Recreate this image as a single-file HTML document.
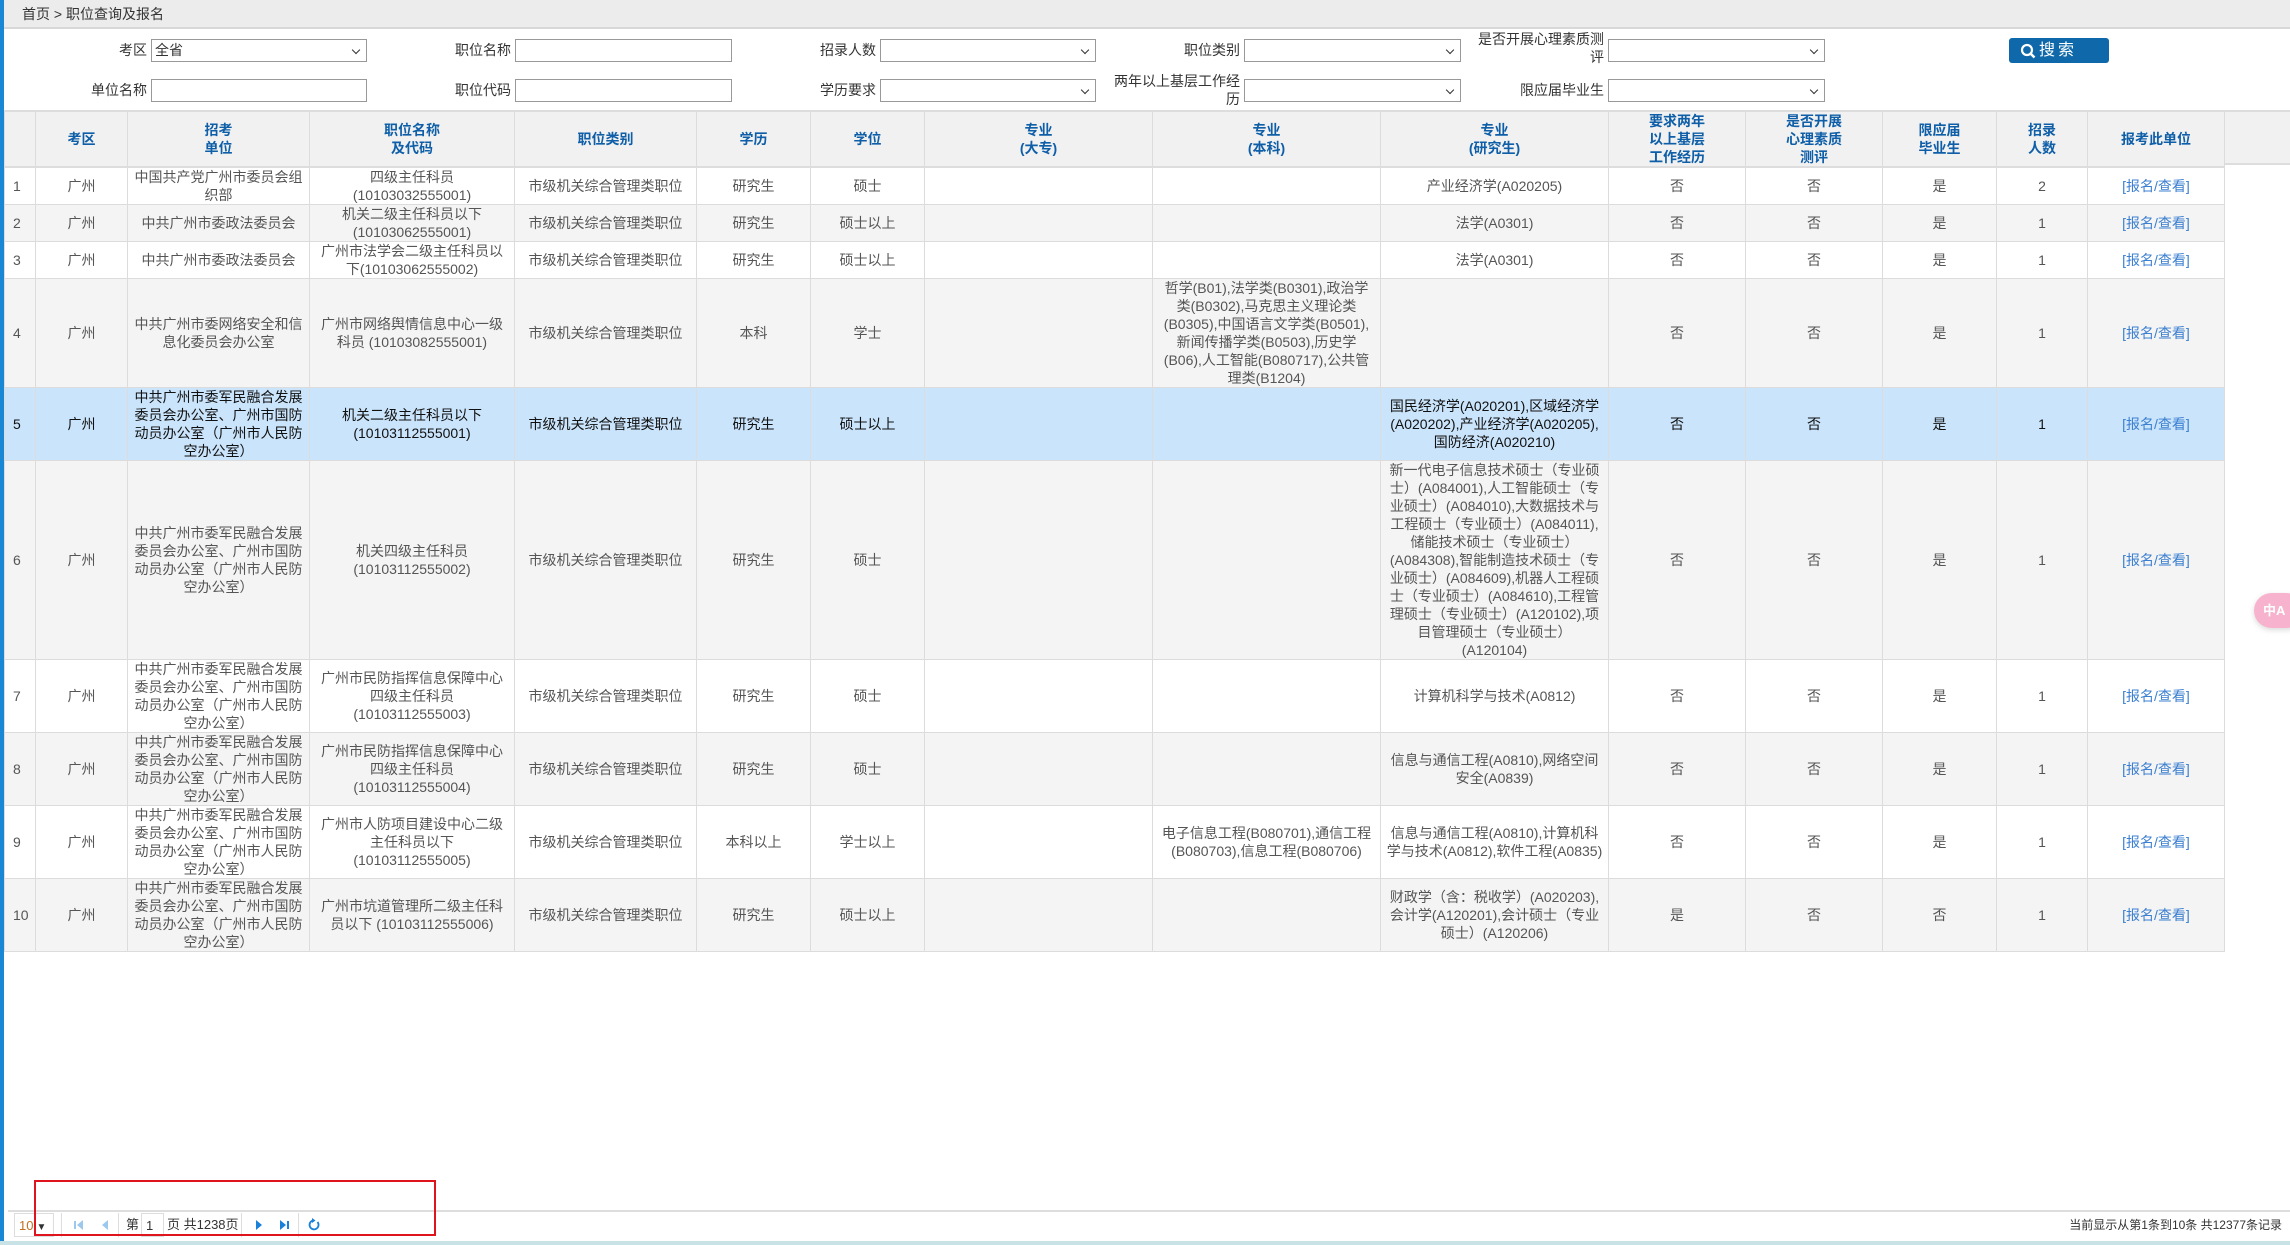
<!DOCTYPE html>
<html><head><meta charset="utf-8">
<style>
*{margin:0;padding:0;box-sizing:border-box}
body{width:2290px;height:1245px;overflow:hidden;background:#fff;font-family:"Liberation Sans","Noto Sans CJK SC",sans-serif;font-size:14px;color:#555;position:relative}
.lbar{position:absolute;left:0;top:0;width:4px;height:1245px;background:#1a87d4}
.crumb{position:absolute;left:4px;top:0;right:0;height:29px;background:#ececec;border-bottom:2px solid #d8d8d8;font-size:14px;color:#333;line-height:29px;padding-left:18px}
.lab{position:absolute;font-size:14px;color:#333;text-align:right;line-height:18px}
.inp{position:absolute;height:23px;border:1px solid #999;background:#fff;font-size:14px;color:#333;line-height:21px;padding-left:3px}
.sel::after{content:"";position:absolute;right:7px;top:7px;width:5px;height:5px;border-right:1.5px solid #333;border-bottom:1.5px solid #333;transform:rotate(45deg)}
.btn{position:absolute;left:2009px;top:38px;width:100px;height:25px;background:#0f68a9;border-radius:3px;color:#fff;font-size:16px;line-height:25px;padding-left:30px;letter-spacing:3px}
.hdrbg{position:absolute;left:4px;right:0;top:110px;height:55px;background:#f1f1f1;border-top:2px solid #ddd;border-bottom:2px solid #ddd}
table{position:absolute;left:4px;top:110px;border-collapse:collapse;table-layout:fixed;width:2220px}
td,th{border:1px solid #dcdcdc;text-align:center;vertical-align:middle;line-height:18px;padding:0 5px;overflow:hidden}
th{color:#0e5ea8;font-weight:bold;font-size:14px;background:#f1f1f1;border-top:2px solid #ddd;border-bottom:2px solid #ddd}
tr.e td{background:#f4f4f4}
tr.s td{background:#cae4fb;color:#111}
td.n{text-align:left;padding-left:8px}
a{color:#3b7fd0;text-decoration:none}
.foot{position:absolute;left:8px;right:0;top:1210px;height:32px;border-top:2px solid #ddd;background:#fff}
.bot{position:absolute;left:0;right:0;top:1241px;height:4px;background:#c8e2e6}
.pg{position:absolute;top:1213px;height:24px;font-size:13px;color:#333;line-height:24px}
.sep{position:absolute;top:1213px;width:1px;height:24px;background:#ddd}
.red{position:absolute;left:34px;top:1180px;width:402px;height:56px;border:2px solid #e0141e}
.pink{position:absolute;left:2254px;top:593px;width:50px;height:35px;border-radius:18px;background:#f7b3cd;box-shadow:0 2px 6px rgba(0,0,0,.15);color:#fff;font-size:13px;font-weight:bold;line-height:35px;padding-left:9px}
</style></head><body>
<div class="lbar"></div>
<div class="crumb">首页 &gt; 职位查询及报名</div>

<div class="lab" style="left:110px;top:41px;width:37px">考区</div>
<div class="inp sel" style="left:151px;top:39px;width:216px">全省</div>
<div class="lab" style="left:440px;top:41px;width:71px">职位名称</div>
<div class="inp" style="left:515px;top:39px;width:217px"></div>
<div class="lab" style="left:800px;top:41px;width:76px">招录人数</div>
<div class="inp sel" style="left:880px;top:39px;width:216px"></div>
<div class="lab" style="left:1165px;top:41px;width:75px">职位类别</div>
<div class="inp sel" style="left:1244px;top:39px;width:217px"></div>
<div class="lab" style="left:1470px;top:30px;width:134px">是否开展心理素质测评</div>
<div class="inp sel" style="left:1608px;top:39px;width:217px"></div>
<div class="btn"><svg style="position:absolute;left:11px;top:5px" width="16" height="16" viewBox="0 0 16 16"><circle cx="7" cy="7" r="5" fill="none" stroke="#fff" stroke-width="2.2"/><path d="M10.5 10.5 L14.5 14.5" stroke="#fff" stroke-width="2.5"/></svg>搜索</div>

<div class="lab" style="left:70px;top:81px;width:77px">单位名称</div>
<div class="inp" style="left:151px;top:79px;width:216px"></div>
<div class="lab" style="left:440px;top:81px;width:71px">职位代码</div>
<div class="inp" style="left:515px;top:79px;width:217px"></div>
<div class="lab" style="left:800px;top:81px;width:76px">学历要求</div>
<div class="inp sel" style="left:880px;top:79px;width:216px"></div>
<div class="lab" style="left:1108px;top:72px;width:132px">两年以上基层工作经历</div>
<div class="inp sel" style="left:1244px;top:79px;width:217px"></div>
<div class="lab" style="left:1500px;top:81px;width:104px">限应届毕业生</div>
<div class="inp sel" style="left:1608px;top:79px;width:217px"></div>

<div class="hdrbg"></div>
<table>
<colgroup><col style="width:31px"><col style="width:92px"><col style="width:182px"><col style="width:205px"><col style="width:182px"><col style="width:114px"><col style="width:114px"><col style="width:228px"><col style="width:228px"><col style="width:228px"><col style="width:137px"><col style="width:137px"><col style="width:114px"><col style="width:91px"><col style="width:137px"></colgroup>
<tr style="height:55px"><th></th><th>考区</th><th>招考<br>单位</th><th>职位名称<br>及代码</th><th>职位类别</th><th>学历</th><th>学位</th><th>专业<br>(大专)</th><th>专业<br>(本科)</th><th>专业<br>(研究生)</th><th>要求两年<br>以上基层<br>工作经历</th><th>是否开展<br>心理素质<br>测评</th><th>限应届<br>毕业生</th><th>招录<br>人数</th><th>报考此单位</th></tr>
<tr style="height:36px"><td class="n">1</td><td>广州</td><td>中国共产党广州市委员会组织部</td><td>四级主任科员 (10103032555001)</td><td>市级机关综合管理类职位</td><td>研究生</td><td>硕士</td><td></td><td></td><td>产业经济学(A020205)</td><td>否</td><td>否</td><td>是</td><td>2</td><td><a>[报名/查看]</a></td></tr>
<tr class="e" style="height:36px"><td class="n">2</td><td>广州</td><td>中共广州市委政法委员会</td><td>机关二级主任科员以下(10103062555001)</td><td>市级机关综合管理类职位</td><td>研究生</td><td>硕士以上</td><td></td><td></td><td>法学(A0301)</td><td>否</td><td>否</td><td>是</td><td>1</td><td><a>[报名/查看]</a></td></tr>
<tr style="height:37px"><td class="n">3</td><td>广州</td><td>中共广州市委政法委员会</td><td>广州市法学会二级主任科员以下(10103062555002)</td><td>市级机关综合管理类职位</td><td>研究生</td><td>硕士以上</td><td></td><td></td><td>法学(A0301)</td><td>否</td><td>否</td><td>是</td><td>1</td><td><a>[报名/查看]</a></td></tr>
<tr class="e" style="height:109px"><td class="n">4</td><td>广州</td><td>中共广州市委网络安全和信息化委员会办公室</td><td>广州市网络舆情信息中心一级科员 (10103082555001)</td><td>市级机关综合管理类职位</td><td>本科</td><td>学士</td><td></td><td>哲学(B01),法学类(B0301),政治学类(B0302),马克思主义理论类(B0305),中国语言文学类(B0501),新闻传播学类(B0503),历史学(B06),人工智能(B080717),公共管理类(B1204)</td><td></td><td>否</td><td>否</td><td>是</td><td>1</td><td><a>[报名/查看]</a></td></tr>
<tr class="s" style="height:73px"><td class="n">5</td><td>广州</td><td>中共广州市委军民融合发展委员会办公室、广州市国防动员办公室（广州市人民防空办公室）</td><td>机关二级主任科员以下(10103112555001)</td><td>市级机关综合管理类职位</td><td>研究生</td><td>硕士以上</td><td></td><td></td><td>国民经济学(A020201),区域经济学(A020202),产业经济学(A020205),国防经济(A020210)</td><td>否</td><td>否</td><td>是</td><td>1</td><td><a>[报名/查看]</a></td></tr>
<tr class="e" style="height:197px"><td class="n">6</td><td>广州</td><td>中共广州市委军民融合发展委员会办公室、广州市国防动员办公室（广州市人民防空办公室）</td><td>机关四级主任科员 (10103112555002)</td><td>市级机关综合管理类职位</td><td>研究生</td><td>硕士</td><td></td><td></td><td>新一代电子信息技术硕士（专业硕士）(A084001),人工智能硕士（专业硕士）(A084010),大数据技术与工程硕士（专业硕士）(A084011),储能技术硕士（专业硕士）(A084308),智能制造技术硕士（专业硕士）(A084609),机器人工程硕士（专业硕士）(A084610),工程管理硕士（专业硕士）(A120102),项目管理硕士（专业硕士）(A120104)</td><td>否</td><td>否</td><td>是</td><td>1</td><td><a>[报名/查看]</a></td></tr>
<tr style="height:73px"><td class="n">7</td><td>广州</td><td>中共广州市委军民融合发展委员会办公室、广州市国防动员办公室（广州市人民防空办公室）</td><td>广州市民防指挥信息保障中心四级主任科员 (10103112555003)</td><td>市级机关综合管理类职位</td><td>研究生</td><td>硕士</td><td></td><td></td><td>计算机科学与技术(A0812)</td><td>否</td><td>否</td><td>是</td><td>1</td><td><a>[报名/查看]</a></td></tr>
<tr class="e" style="height:73px"><td class="n">8</td><td>广州</td><td>中共广州市委军民融合发展委员会办公室、广州市国防动员办公室（广州市人民防空办公室）</td><td>广州市民防指挥信息保障中心四级主任科员 (10103112555004)</td><td>市级机关综合管理类职位</td><td>研究生</td><td>硕士</td><td></td><td></td><td>信息与通信工程(A0810),网络空间安全(A0839)</td><td>否</td><td>否</td><td>是</td><td>1</td><td><a>[报名/查看]</a></td></tr>
<tr style="height:73px"><td class="n">9</td><td>广州</td><td>中共广州市委军民融合发展委员会办公室、广州市国防动员办公室（广州市人民防空办公室）</td><td>广州市人防项目建设中心二级主任科员以下 (10103112555005)</td><td>市级机关综合管理类职位</td><td>本科以上</td><td>学士以上</td><td></td><td>电子信息工程(B080701),通信工程(B080703),信息工程(B080706)</td><td>信息与通信工程(A0810),计算机科学与技术(A0812),软件工程(A0835)</td><td>否</td><td>否</td><td>是</td><td>1</td><td><a>[报名/查看]</a></td></tr>
<tr class="e" style="height:72px"><td class="n">10</td><td>广州</td><td>中共广州市委军民融合发展委员会办公室、广州市国防动员办公室（广州市人民防空办公室）</td><td>广州市坑道管理所二级主任科员以下 (10103112555006)</td><td>市级机关综合管理类职位</td><td>研究生</td><td>硕士以上</td><td></td><td></td><td>财政学（含：税收学）(A020203),会计学(A120201),会计硕士（专业硕士）(A120206)</td><td>是</td><td>否</td><td>否</td><td>1</td><td><a>[报名/查看]</a></td></tr>
</table>

<div class="pink">中A</div>

<div class="foot"></div>
<div class="pg" style="left:14px;width:40px;border:1px solid #ddd;padding-left:4px;color:#c07020">10<span style="color:#333;font-size:10px;margin-left:3px">▼</span></div>
<div class="sep" style="left:61px"></div>
<svg class="pg" style="left:73px" width="12" height="24" viewBox="0 0 12 24"><rect x="1" y="8" width="2" height="8" fill="#9cc8ee"/><path d="M10 7 L4 12 L10 17Z" fill="#9cc8ee"/></svg>
<svg class="pg" style="left:99px" width="12" height="24" viewBox="0 0 12 24"><path d="M9 7 L3 12 L9 17Z" fill="#9cc8ee"/></svg>
<div class="sep" style="left:118px"></div>
<div class="pg" style="left:126px">第</div>
<div class="pg" style="left:141px;width:23px;border:1px solid #ddd;padding-left:4px">1</div>
<div class="pg" style="left:167px">页 共1238页</div>
<div class="sep" style="left:241px"></div>
<svg class="pg" style="left:253px" width="12" height="24" viewBox="0 0 12 24"><path d="M3 7 L9 12 L3 17Z" fill="#1a80d8"/></svg>
<svg class="pg" style="left:278px" width="12" height="24" viewBox="0 0 12 24"><path d="M2 7 L8 12 L2 17Z" fill="#1a80d8"/><rect x="9" y="8" width="2" height="8" fill="#1a80d8"/></svg>
<div class="sep" style="left:298px"></div>
<svg class="pg" style="left:307px" width="14" height="24" viewBox="0 0 14 24"><path d="M10.5 9 A4.5 4.5 0 1 1 6 7.5" fill="none" stroke="#1a80d8" stroke-width="1.8"/><path d="M5 5 L8.5 7.5 L5 10Z" fill="#1a80d8"/></svg>
<div class="pg" style="right:8px;font-size:12px">当前显示从第1条到10条 共12377条记录</div>
<div class="red"></div>
<div class="bot"></div>
</body></html>
